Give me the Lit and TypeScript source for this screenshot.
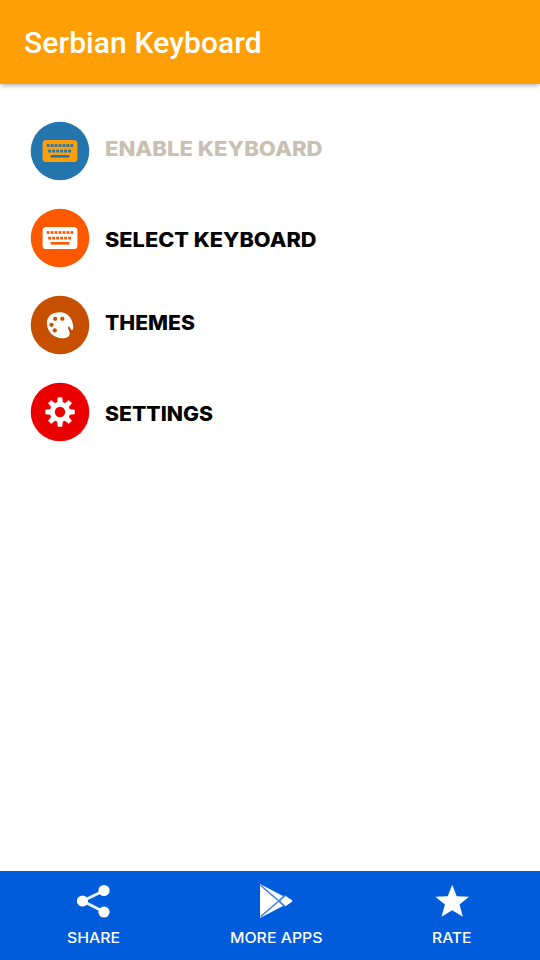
import { LitElement, html, svg, css } from "lit";
import { customElement } from "lit/decorators.js";

interface Entry {
  label: string;
  width: number;
  baseline: number;
  color: string;
  ink?: string;
  icon: unknown;
}

const keyboard = (body: string, keys: string) => svg`
  <rect x="12.6" y="19" width="34.8" height="22" rx="3.6" fill=${body}></rect>
  ${[0, 1, 2, 3, 4, 5, 6].map((i) => svg`<rect x=${16.7 + i * 3.95} y="23.1" width="2.8" height="2.8" fill=${keys}></rect>`)}
  ${[0, 1, 2, 3, 4, 5].map((i) => svg`<rect x=${18.2 + i * 4} y="28.7" width="2.8" height="2.8" fill=${keys}></rect>`)}
  <rect x="20.6" y="34" width="18.8" height="2.6" fill=${keys}></rect>`;

const palette = svg`
  <path d="M30 17.2C22.4 17.2 16.9 21.2 16.9 27.9C16.9 36.4 23.6 43.2 32.6 43.2C37 43.2 39.7 41.3 39.7 38.2C39.7 35.9 38 34.3 38 32.7C38 31.3 39.4 31.2 40 32.4C40.7 33.9 40.9 35 42.2 35C43.1 35 43.4 33.5 43.2 31.2C42.6 23.2 37.4 17.2 30 17.2Z" fill="#fff"></path>
  ${[[25.2, 23.8], [32.3, 23.8], [21.5, 29.8], [24.8, 35.4]].map(([x, y]) => svg`<circle cx=${x} cy=${y} r="2.15" fill="#c75000"></circle>`)}`;

const gear = svg`
  ${[0, 45, 90, 135, 180, 225, 270, 315].map((a) => svg`<path d="M27.4 21.5L28 15.6H32L32.6 21.5Z" fill="#fff" stroke="#fff" stroke-width=".6" stroke-linejoin="round" transform=${`rotate(${a} 30 30)`}></path>`)}
  <circle cx="30" cy="30" r="7.7" fill="none" stroke="#fff" stroke-width="5"></circle>`;

const entries: Entry[] = [
  { label: "ENABLE KEYBOARD", width: 217.5, baseline: 19.8, color: "#2474ad", ink: "#c9c0b4", icon: keyboard("#ff9f08", "#2474ad") },
  { label: "SELECT KEYBOARD", width: 211.5, baseline: 23.8, color: "#ff5900", icon: keyboard("#fff", "#ff5900") },
  { label: "THEMES", width: 90, baseline: 19.8, color: "#c75000", icon: palette },
  { label: "SETTINGS", width: 108, baseline: 24, color: "#eb0000", icon: gear },
];

const actions = [
  {
    label: "SHARE", width: 53,
    icon: svg`<path d="M29.3 7.5L7.7 18L29.3 29" fill="none" stroke="#fff" stroke-opacity=".9" stroke-width="3"></path>
      <circle cx="29" cy="7.5" r="5.6"></circle><circle cx="7.5" cy="18" r="5.6"></circle><circle cx="29" cy="29" r="5.6"></circle>`,
  },
  {
    label: "MORE APPS", width: 92.5,
    icon: svg`<path d="M2 1L25 13L27.5 12.8L34 17.2Q34.8 18 34 18.8L27.5 23.2L25 23L2 35Z"></path>
      <path d="M2.5 2.2L27.6 23.8M2.5 33.8L27.6 12.2" fill="none" stroke="#3b7fe3" stroke-width="1.5"></path>
      <path d="M25.4 12.4L21.6 16.6L23.2 18L21.6 19.4L25.4 23.6" fill="none" stroke="#3b7fe3" stroke-width=".6"></path>`,
  },
  {
    label: "RATE", width: 39.5,
    icon: svg`<path d="M18.2 1.8L22.7 13.2L35 13.8L25.5 21.6L28.9 33.8L18.2 27.3L7.5 33.8L10.9 21.6L1.4 13.8L13.7 13.2Z"></path>`,
  },
];

@customElement("app-root")
export class AppRoot extends LitElement {
  static styles = css`
    :host {
      display: flex;
      flex-direction: column;
      height: 100vh;
      background: #fff;
    }
    header {
      flex: none;
      height: 84px;
      display: flex;
      align-items: center;
      box-sizing: border-box;
      padding: 2px 24px 0;
      background: #ff9f08;
      box-shadow: 0 3px 4px -1px rgba(0, 0, 0, 0.28);
    }
    h1 {
      margin: 0;
      font: 500 30px/36px Roboto, sans-serif;
      letter-spacing: 0.1px;
      color: #fff;
      white-space: nowrap;
    }
    main {
      flex: 1;
      padding: 23.5px 30px 0;
    }
    .entry {
      height: 87px;
      display: flex;
      align-items: center;
      gap: 15px;
    }
    svg {
      display: block;
      flex: none;
      overflow: visible;
    }
    .label {
      font: 800 20px Inter, sans-serif;
      fill: #000;
    }
    footer {
      flex: none;
      height: 89px;
      box-sizing: border-box;
      padding: 12px 5px 0;
      display: grid;
      grid-template-columns: 176px 190px 162px;
      background: #005cdb;
    }
    .action {
      display: flex;
      flex-direction: column;
      align-items: center;
      gap: 12px;
    }
    .glyph {
      fill: #fff;
    }
    .caption {
      font: 550 14.4px Inter, sans-serif;
      fill: #fff;
    }
  `;

  render() {
    return html`
      <header><h1>Serbian Keyboard</h1></header>
      <main>
        ${entries.map(
          (e) => html`<div class="entry">
            <svg width="60" height="60" viewBox="0 0 60 60">
              <circle cx="30" cy="30" r="29.3" fill=${e.color}></circle>
              ${e.icon}
            </svg>
            <svg width=${e.width} height="30">
              <text class="label" x="0" y=${e.baseline} style=${e.ink ? `fill:${e.ink}` : ""} textLength=${e.width} lengthAdjust="spacingAndGlyphs">${e.label}</text>
            </svg>
          </div>`
        )}
      </main>
      <footer>
        ${actions.map(
          (a) => html`<div class="action">
            <svg class="glyph" width="36" height="36" viewBox="0 0 36 36">${a.icon}</svg>
            <svg width=${a.width} height="14">
              <text class="caption" x="0" y="12" textLength=${a.width} lengthAdjust="spacingAndGlyphs">${a.label}</text>
            </svg>
          </div>`
        )}
      </footer>
    `;
  }
}
